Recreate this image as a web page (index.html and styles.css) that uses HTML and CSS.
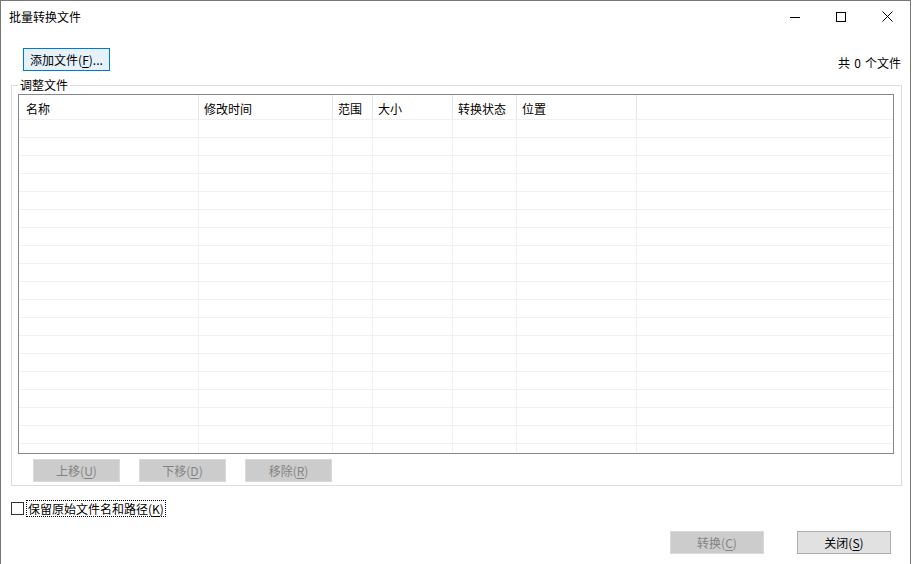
FILE: index.html
```html
<!DOCTYPE html>
<html lang="zh-CN">
<head>
<meta charset="utf-8">
<title>批量转换文件</title>
<link rel="stylesheet" href="styles.css">
</head>
<body>
<div class="window">
  <div class="titlebar">
    <div class="title">批量转换文件</div>
    <div class="controls">
      <div class="ctl"><svg width="10" height="10" viewBox="0 0 10 10"><path d="M0 5.5H10" stroke="#000" stroke-width="1"/></svg></div>
      <div class="ctl"><svg width="10" height="10" viewBox="0 0 10 10"><rect x="0.5" y="0.5" width="9" height="9" fill="none" stroke="#000" stroke-width="1"/></svg></div>
      <div class="ctl"><svg width="11" height="11" viewBox="0 0 11 11"><path d="M0.5 0.5L10.5 10.5M10.5 0.5L0.5 10.5" stroke="#000" stroke-width="1"/></svg></div>
    </div>
  </div>

  <div class="toolbar">
    <button class="btn btn-focus">添加文件(<u>F</u>)...</button>
    <div class="count">共 0 个文件</div>
  </div>

  <fieldset class="group">
    <legend class="legend">调整文件</legend>
    <div class="list">
      <div class="row head">
        <div class="cell first">名称</div>
        <div class="cell">修改时间</div>
        <div class="cell">范围</div>
        <div class="cell">大小</div>
        <div class="cell">转换状态</div>
        <div class="cell">位置</div>
        <div class="cell last"></div>
      </div>
      <div class="body" id="body"></div>
    </div>
    <div class="listbtns">
      <button class="btn btn-dis">上移(<u>U</u>)</button>
      <button class="btn btn-dis">下移(<u>D</u>)</button>
      <button class="btn btn-dis">移除(<u>R</u>)</button>
    </div>
  </fieldset>

  <div class="checkrow">
    <span class="checkbox"></span>
    <span class="checklabel">保留原始文件名和路径(<u>K</u>)</span>
  </div>

  <div class="footer">
    <button class="btn btn-dis wide">转换(<u>C</u>)</button>
    <button class="btn btn-norm wide">关闭(<u>S</u>)</button>
  </div>
</div>
<script src="script.js"></script>
</body>
</html>
```

FILE: script.js
```js
(function () {
  var body = document.getElementById('body');
  for (var i = 0; i < 19; i++) {
    var row = document.createElement('div');
    row.className = 'row';
    for (var c = 0; c < 7; c++) {
      var cell = document.createElement('div');
      cell.className = 'cell' + (c === 6 ? ' last' : '');
      row.appendChild(cell);
    }
    body.appendChild(row);
  }
})();
```

FILE: styles.css
```css
* { box-sizing: border-box; }
html, body { margin: 0; padding: 0; background: #fff; }
body {
  font-family: "Noto Sans CJK SC", "Microsoft YaHei", sans-serif;
  font-size: 12px;
  color: #000;
}
.window {
  width: 911px;
  height: 564px;
  border: 1px solid #777;
  border-bottom: none;
  background: #fff;
  display: flex;
  flex-direction: column;
  overflow: hidden;
}
.titlebar {
  height: 30px;
  display: flex;
  align-items: center;
  justify-content: space-between;
  flex: none;
}
.title {
  padding-left: 8px;
  line-height: 16px;
  padding-top: 1px;
}
.controls { display: flex; height: 30px; }
.ctl {
  width: 46px;
  height: 30px;
  display: flex;
  align-items: center;
  justify-content: center;
  padding-top: 1px;
}
.ctl svg { display: block; }

.toolbar {
  display: flex;
  justify-content: space-between;
  align-items: flex-end;
  margin-top: 17px;
  padding-left: 22px;
  padding-right: 9px;
  flex: none;
}
.count { line-height: 16px; word-spacing: 1.5px; }

.btn {
  font-family: inherit;
  font-size: 12px;
  height: 23px;
  padding: 0;
  margin: 0;
  line-height: 20px;
  text-align: center;
  cursor: default;
}
.btn u { text-underline-offset: 2px; }
.btn-focus {
  width: 87px;
  border: 1px solid #0078d7;
  background: #e5f1fb;
  color: #000;
}
.btn-dis {
  width: 87px;
  border: 1px solid #dadada;
  background: #cccccc;
  color: #838383;
}
.btn-norm {
  border: 1px solid #adadad;
  background: #e1e1e1;
  color: #000;
}
.wide { width: 94px; }

.group {
  margin: 6px 8px 0 10px;
  border: 1px solid #dcdcdc;
  padding: 1px 7px 3px 6px;
  min-width: 0;
  flex: none;
}
.legend {
  padding: 0 2px;
  line-height: 16px;
  margin-left: 0;
}
.list {
  height: 360px;
  border: 1px solid #828790;
  overflow: hidden;
  background: #fff;
}
.row {
  display: grid;
  grid-template-columns: 180px 134px 40px 80px 64px 120px 1fr;
  height: 18px;
  border-bottom: 1px solid #f0f0f0;
}
.row .cell { border-right: 1px solid #f0f0f0; }
.row .cell.last { border-right: none; }
.head {
  height: 25px;
  border-bottom: 1px solid #f0f0f0;
}
.head .cell {
  border-right: 1px solid #e5e5e5;
  padding-left: 5px;
  line-height: 16px;
  padding-top: 6px;
  white-space: nowrap;
}
.head .cell.first { padding-left: 7px; }
.head .cell.last { border-right: none; }

.listbtns {
  display: flex;
  gap: 19px;
  margin-top: 5px;
  padding-left: 15px;
}

.checkrow {
  display: flex;
  align-items: center;
  margin-top: 14px;
  padding-left: 10px;
  height: 17px;
  flex: none;
}
.checkbox {
  width: 13px;
  height: 13px;
  border: 1px solid #333;
  background: #fff;
  flex: none;
}
.checklabel {
  margin-left: 2px;
  border: 1px dotted #000;
  padding: 0 1px;
  line-height: 15px;
}
.checklabel u { text-underline-offset: 2px; }

.footer {
  display: flex;
  justify-content: flex-end;
  gap: 33px;
  margin-top: 14px;
  padding-right: 19px;
  flex: none;
}
```
